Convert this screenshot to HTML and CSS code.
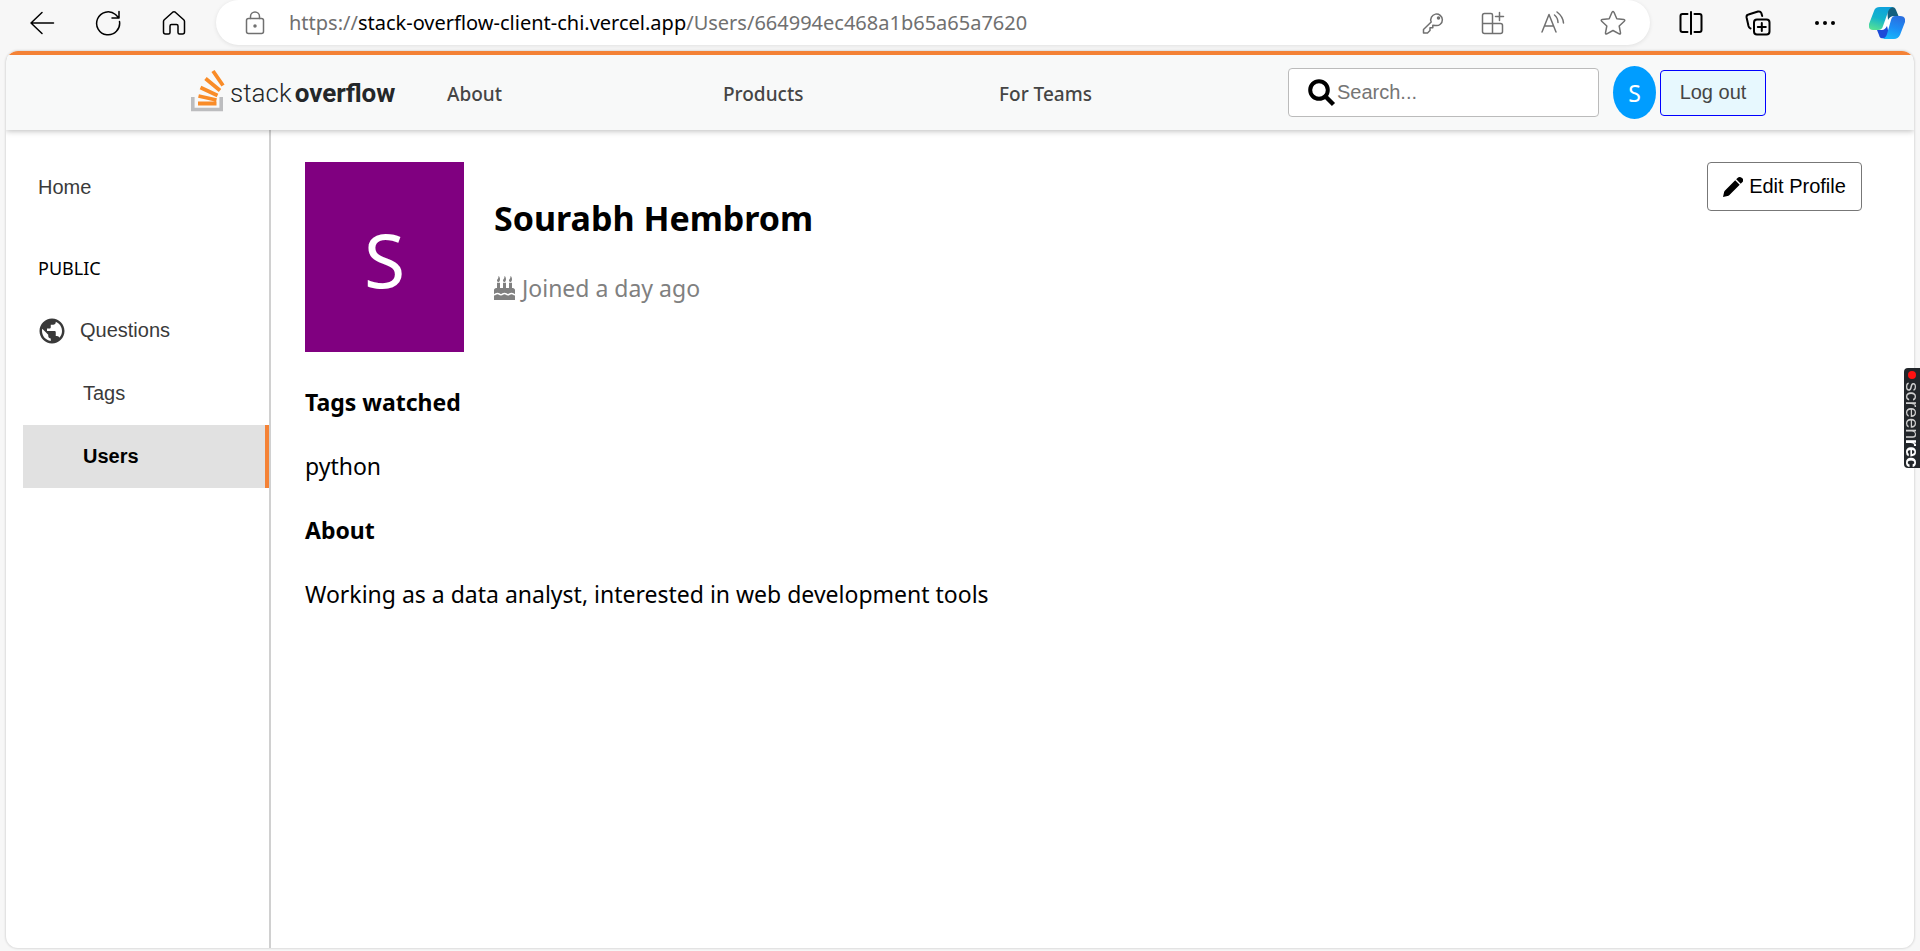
FILE: index.html
```html
<!DOCTYPE html>
<html lang="en">
<head>
<meta charset="utf-8">
<title>Stack Overflow - Sourabh Hembrom</title>
<meta name="viewport" content="width=device-width, initial-scale=1">
<link rel="stylesheet" href="styles.css">
</head>
<body>
<div class="toolbar">
  <div class="toolbar-nav">
    <button type="button" class="icon-button" aria-label="Back">
      <svg width="26" height="26" viewBox="0 0 26 26"><path d="M24.500 13H2M13 2.500L2 13l11 10.500"/></svg>
    </button>
    <button type="button" class="icon-button" aria-label="Refresh">
      <svg width="26" height="26" viewBox="0 0 26 26"><path d="M24.500 11.500A11.500 11.500 0 1 1 20.500 4.500L24 8M24 1.500V8h-7"/></svg>
    </button>
    <button type="button" class="icon-button" aria-label="Home">
      <svg width="26" height="26" viewBox="0 0 26 26"><path d="M2.500 11.500Q2.500 10.500 3.300 9.700L11.700 2.200Q13 1.200 14.300 2.200L22.700 9.700Q23.500 10.500 23.500 11.500V22Q23.500 24 21.500 24H18.500Q17 24 17 22.500V16Q17 14.500 15.500 14.500H10.500Q9 14.500 9 16V22.500Q9 24 7.500 24H4.500Q2.500 24 2.500 22Z"/></svg>
    </button>
  </div>
  <div class="address">
    <svg class="lock" width="20" height="24" viewBox="0 0 20 24"><rect x="1.500" y="7.500" width="17" height="15" rx="2"/><path d="M5.500 7.500V5.500a4.500 4.500 0 0 1 9 0v2"/><circle cx="10" cy="15" r="1" fill="currentColor"/></svg>
    <span class="url">https://<span class="host">stack-overflow-client-chi.vercel.app</span>/Users/664994ec468a1b65a65a7620</span>
    <div class="address-tools">
      <button type="button" class="icon-button" aria-label="Passwords">
        <svg width="26" height="26" viewBox="0 0 26 26"><path d="M11.200 12A5.800 5.800 0 1 1 15.500 15.500L12.800 15.300V17.800H10V20.500L7.500 23H3.500V19.500Z"/><circle cx="18.500" cy="8" r="1" fill="currentColor"/></svg>
      </button>
      <button type="button" class="icon-button" aria-label="Extensions">
        <svg width="26" height="26" viewBox="0 0 26 26"><path d="M12.500 13.500V5Q12.500 3.500 11 3.500H4.500Q2.500 3.500 2.500 5.500V21.500Q2.500 23.500 4.500 23.500H20.500Q22.500 23.500 22.500 21.500V15.500Q22.500 13.500 20.500 13.500H2.500M12.500 13.500V23.500M19.500 2.500v8M15.500 6.500h8"/></svg>
      </button>
      <button type="button" class="icon-button" aria-label="Read aloud">
        <svg width="26" height="26" viewBox="0 0 26 26"><path d="M2 22L9 4.500 16 22M4.500 16H13.500M14.500 5Q18 8 18 12.500M17 2Q23 6.500 23.500 13"/></svg>
      </button>
      <button type="button" class="icon-button" aria-label="Add to favorites">
        <svg width="26" height="26" viewBox="0 0 26 26"><path d="M12 2.300Q13 .8 14 2.300L16.800 8.700 23.800 9.500Q25.500 9.900 24.300 11.200L19.200 16 20.500 22.800Q20.700 24.500 19.200 23.800L13 20.500 6.800 23.800Q5.300 24.500 5.500 22.800L6.800 16 1.700 11.200Q.5 9.900 2.200 9.500L9.200 8.700Z"/></svg>
      </button>
    </div>
  </div>
  <div class="toolbar-tools">
    <button type="button" class="icon-button" aria-label="Split screen">
      <svg class="strong" width="26" height="26" viewBox="0 0 26 26"><path d="M9.500 4H4.500Q2.500 4 2.500 6V20Q2.500 22 4.500 22H9.500M16.500 4H21.500Q23.500 4 23.500 6V20Q23.500 22 21.500 22H16.500M13 2V24"/></svg>
    </button>
    <button type="button" class="icon-button" aria-label="Collections">
      <svg class="strong" width="26" height="26" viewBox="0 0 26 26"><rect x="9" y="9.500" width="15.500" height="15" rx="3"/><path d="M16.800 13v8M12.800 17h8M5.500 18.500Q4 18 3.500 16L1.600 7.500Q1.200 5 3.500 4.500L13 1.500Q15.500 1 16.300 3L17.200 6"/></svg>
    </button>
    <button type="button" class="icon-button" aria-label="Settings and more">
      <svg width="26" height="26" viewBox="0 0 26 26"><g fill="currentColor" stroke="none"><circle cx="5" cy="13" r="2"/><circle cx="13" cy="13" r="2"/><circle cx="21" cy="13" r="2"/></g></svg>
    </button>
    <button type="button" class="icon-button copilot" aria-label="Copilot">
      <svg width="36" height="32" viewBox="0 0 36 32">
        <defs>
          <linearGradient id="left" x1="0.600" y1="0" x2="0.300" y2="1"><stop offset="0" stop-color="#0ea2dc"/><stop offset=".5" stop-color="#14b4cb"/><stop offset="1" stop-color="#55e095"/></linearGradient>
          <linearGradient id="right" x1="0.600" y1="0" x2="0.300" y2="1"><stop offset="0" stop-color="#2a6fe0"/><stop offset=".5" stop-color="#1c8df5"/><stop offset="1" stop-color="#18b8fa"/></linearGradient>
        </defs>
        <g stroke="none">
          <path fill="#fff" d="M19 8H27L20 24H12Z"/>
          <path fill="#14607f" d="M18 0H23Q26 0 27 3L29.500 9H25Q21 9 19 13Z"/>
          <path fill="#1c4bd8" d="M8 23H13Q16 23 18 19L21 31H14Q11 32 10 28Z"/>
          <path fill="url(#left)" d="M11 0H24Q20 1 19 5L14 19Q13 23 9 23H4Q-1 23 0 17L5 4Q6 0 11 0Z"/>
          <path fill="url(#right)" d="M26 9H31Q37 9 36 15L31 28Q29 32 25 32H13Q17 31 18 27L22 13Q23 9 26 9Z"/>
        </g>
      </svg>
    </button>
  </div>
</div>

<div class="page">
  <header class="site-header">
    <a class="logo" href="#" aria-label="Stack Overflow">
      <svg width="34" height="43" viewBox="0 0 34 43">
        <path d="M1.800 28V40.500H30.200V28" fill="none" stroke="#bcbdbf" stroke-width="3.600"/>
        <g fill="none" stroke="#f98c28" stroke-width="3.800"><path d="M7 34.500H25.500M7.500 27L25.500 31M9.500 18.500L26.500 26.500M14.500 9.500L29 21.500M22 2L32 16.500"/></g>
      </svg>
      <span class="logo-text">stack<b>overflow</b></span>
    </a>
    <nav class="site-nav">
      <a href="#">About</a>
      <a href="#">Products</a>
      <a href="#">For Teams</a>
    </nav>
    <form class="search">
      <svg width="28" height="28" viewBox="0 0 28 28" fill="none" stroke="#000"><circle cx="11" cy="11" r="8.800" stroke-width="4"/><path d="M17.500 17.500L25.500 25.500" stroke-width="4.500"/></svg>
      <input type="text" placeholder="Search..." aria-label="Search">
    </form>
    <div class="account">
      <a class="avatar" href="#">S</a>
      <button type="button" class="logout">Log out</button>
    </div>
  </header>

  <div class="body">
    <aside class="sidebar">
      <a class="side-link" href="#">Home</a>
      <div class="side-title">PUBLIC</div>
      <a class="side-link with-icon" href="#">
        <svg width="30" height="30" viewBox="0 0 24 24" fill="#393939"><path d="M12 2C6.480 2 2 6.480 2 12s4.480 10 10 10 10-4.480 10-10S17.520 2 12 2zm-1 17.930c-3.950-.49-7-3.850-7-7.930 0-.62.080-1.210.21-1.790L9 15v1c0 1.100.9 2 2 2v1.930zm6.900-2.540c-.26-.81-1-1.390-1.900-1.390h-1v-3c0-.55-.45-1-1-1H8v-2h2c.55 0 1-.45 1-1V7h2c1.100 0 2-.9 2-2v-.41c2.930 1.190 5 4.060 5 7.410 0 2.080-.8 3.970-2.100 5.390z"/></svg>
        Questions
      </a>
      <a class="side-link indent" href="#">Tags</a>
      <a class="side-link indent active" href="#" aria-current="page">Users</a>
    </aside>

    <main class="profile">
      <section class="profile-top">
        <div class="photo">S</div>
        <div class="identity">
          <h1>Sourabh Hembrom</h1>
          <p class="joined">
            <svg width="21" height="24" viewBox="0 0 448 512" fill="currentColor"><path d="M448 384c-28 0-31-26-74-26-44 0-46 26-75 26-28 0-31-26-75-26s-46 26-75 26-31-26-75-26-46 26-74 26v-80c0-27 21-48 48-48h16V144h64v112h64V144h64v112h64V144h64v112h16c27 0 48 21 48 48zm0 128H0v-96c43 0 46-26 74-26s31 26 75 26 46-26 75-26 31 26 75 26 46-26 75-26 31 26 74 26zM96 128c-18 0-32-14-32-32 0-31 32-24 32-96 12 0 32 38 32 68S114 128 96 128zm128 0c-18 0-32-14-32-32 0-31 32-24 32-96 12 0 32 38 32 68s-14 60-32 60zm128 0c-18 0-32-14-32-32 0-31 32-24 32-96 12 0 32 38 32 68s-14 60-32 60z"/></svg>
            Joined a day ago
          </p>
        </div>
        <button type="button" class="edit">
          <svg width="20" height="20" viewBox="0 0 20 20"><path d="M12.200 3.300L16.700 7.800 6.200 18.200Q5.500 18.800 4.500 19L0 20 1 15.500Q1.200 14.600 1.800 13.800ZM13.200 2.300L14.500 1Q16.500-1 19 1T19 5.500L17.700 6.800Z"/></svg>
          Edit Profile
        </button>
      </section>
      <section class="details">
        <h2>Tags watched</h2>
        <p>python</p>
        <h2>About</h2>
        <p>Working as a data analyst, interested in web development tools</p>
      </section>
    </main>
  </div>
</div>

<div class="recorder"><i></i><span>screen<b>rec</b></span></div>
</body>
</html>
```
FILE: styles.css
```css
* {
  box-sizing: border-box;
}

body {
  margin: 0;
  min-height: 100vh;
  display: flex;
  flex-direction: column;
  background: #f7f7f7;
  color: #000;
  font-family: "Segoe UI", "Noto Sans", "Open Sans", sans-serif;
  font-size: 20px;
}

a {
  color: inherit;
  text-decoration: none;
}

button {
  font-family: "Liberation Sans", Arial, sans-serif;
  font-size: 20px;
  cursor: pointer;
}

svg {
  display: block;
  flex: none;
}

/* Browser toolbar */
.toolbar {
  display: flex;
  align-items: center;
  height: 45px;
  margin-bottom: 6px;
}

.toolbar-nav,
.toolbar-tools,
.address-tools {
  display: flex;
  align-items: center;
}

.toolbar-nav {
  gap: 40px;
  padding: 0 29px;
}

.toolbar-tools {
  gap: 41px;
  padding: 0 15px 0 28px;
}

.address-tools {
  gap: 34px;
  margin-left: auto;
}

.icon-button {
  display: block;
  padding: 0;
  border: 0;
  background: none;
  color: inherit;
}

.copilot {
  margin-left: -10px;
}

.toolbar svg {
  fill: none;
  stroke: currentColor;
  stroke-width: 1.5;
  stroke-linecap: round;
  stroke-linejoin: round;
}

.toolbar .strong {
  stroke-width: 2;
}

.address {
  flex: 1;
  display: flex;
  align-items: center;
  gap: 24px;
  height: 45px;
  padding: 0 24px 0 29px;
  border-radius: 23px;
  background: #fff;
  box-shadow: 0 1px 4px #00000018;
  color: #707070;
}

.url {
  font-size: 20px;
  white-space: nowrap;
}

.host {
  color: #000;
}

/* Page */
.page {
  flex: 1;
  display: flex;
  flex-direction: column;
  margin: 0 6px 3px;
  border-radius: 12px;
  overflow: hidden;
  background: #fff;
  box-shadow: 0 0 2px 1px #0000001c;
}

.site-header {
  position: relative;
  display: flex;
  align-items: center;
  height: 79px;
  padding: 0 148px 0 185px;
  border-top: 4px solid #f48236;
  background: #f8f9f9;
  box-shadow: 0 1px 6px #00000045;
}

.logo {
  display: flex;
  align-items: center;
  gap: 5px;
  width: 210px;
  margin-bottom: 4px;
  color: #242729;
}

.logo-text {
  font-family: Roboto, sans-serif;
  font-size: 26px;
  font-weight: 300;
  line-height: 40px;
  padding-top: 4px;
}

.logo-text b {
  margin-left: 3px;
  font-weight: 700;
}

.site-nav {
  display: grid;
  grid-template-columns: repeat(3, 276px);
  padding: 2px 0 0 46px;
  color: #454545;
  font-size: 19px;
  font-weight: 500;
}

.search {
  display: flex;
  align-items: center;
  width: 311px;
  height: 49px;
  margin: 0 14px 0 auto;
  padding: 0 19px;
  border: 1px solid #bbb;
  border-radius: 4px;
  background: #fff;
}

.search input {
  flex: 1;
  min-width: 0;
  padding: 0 0 0 1px;
  border: 0;
  outline: 0;
  background: none;
  font-family: "Liberation Sans", Arial, sans-serif;
  font-size: 20px;
}

.account {
  display: flex;
  align-items: center;
  gap: 4px;
}

.avatar {
  display: grid;
  place-items: center;
  width: 43px;
  height: 53px;
  border-radius: 50%;
  background: #009dff;
  color: #fff;
  font-size: 23px;
}

.logout {
  width: 106px;
  height: 46px;
  padding: 0;
  border: 1px solid #0000ff;
  border-radius: 4px;
  background: #e7f8fe;
  color: #454545;
}

.body {
  flex: 1;
  display: flex;
}

/* Sidebar */
.sidebar {
  width: 265px;
  padding: 26px 0 0 17px;
  border-right: 2px solid #d0d0d0;
  color: #3a3a3a;
  font-family: "Liberation Sans", Arial, sans-serif;
}

.side-link {
  display: flex;
  align-items: center;
  height: 63px;
  padding-left: 15px;
}

.side-title {
  margin-top: 31px;
  height: 49px;
  padding-left: 15px;
  color: #000;
  font-family: "Segoe UI", "Noto Sans", "Open Sans", sans-serif;
  font-size: 18px;
  line-height: 36px;
}

.with-icon {
  gap: 13px;
  padding-left: 14px;
}

.indent {
  padding-left: 60px;
}

.active {
  border-right: 4px solid #f48236;
  background: #e1e1e1;
  color: #000;
  font-weight: 700;
}

/* Profile */
.profile {
  flex: 1;
  padding: 32px 52px 32px 34px;
}

.profile-top {
  display: flex;
  align-items: flex-start;
}

.photo {
  display: grid;
  place-items: center;
  width: 159px;
  height: 190px;
  padding-top: 4px;
  background: purple;
  color: #fff;
  font-size: 75px;
}

.identity {
  flex: 1;
  padding-left: 30px;
}

h1 {
  margin: 32px 0 0;
  font-size: 34px;
  line-height: 48px;
}

.joined {
  display: flex;
  align-items: center;
  gap: 7px;
  margin: 30px 0 0;
  color: #808080;
  font-size: 23px;
  line-height: 32px;
}

.edit {
  display: flex;
  align-items: center;
  justify-content: center;
  gap: 6px;
  width: 155px;
  height: 49px;
  padding: 0;
  border: 1px solid #777;
  border-radius: 4px;
  background: #fff;
  color: #000;
  white-space: nowrap;
}

.details {
  display: grid;
  gap: 32px;
  padding-top: 34px;
  font-size: 23px;
  line-height: 32px;
}

.details h2,
.details p {
  margin: 0;
  font-size: inherit;
}

/* Recorder tab that floats over the window edge */
.recorder {
  position: fixed;
  top: 368px;
  right: 0;
  display: flex;
  flex-direction: column;
  align-items: center;
  gap: 3px;
  width: 16px;
  height: 100px;
  padding-top: 3px;
  border-radius: 4px 0 0 4px;
  background: #22262a;
  color: #d0d0d0;
  font-family: "Liberation Sans", Arial, sans-serif;
  font-size: 19px;
  line-height: 16px;
}

.recorder b {
  color: #fff;
}

.recorder i {
  width: 8px;
  height: 8px;
  border-radius: 50%;
  background: #f11;
}

.recorder span {
  writing-mode: vertical-rl;
}
```
